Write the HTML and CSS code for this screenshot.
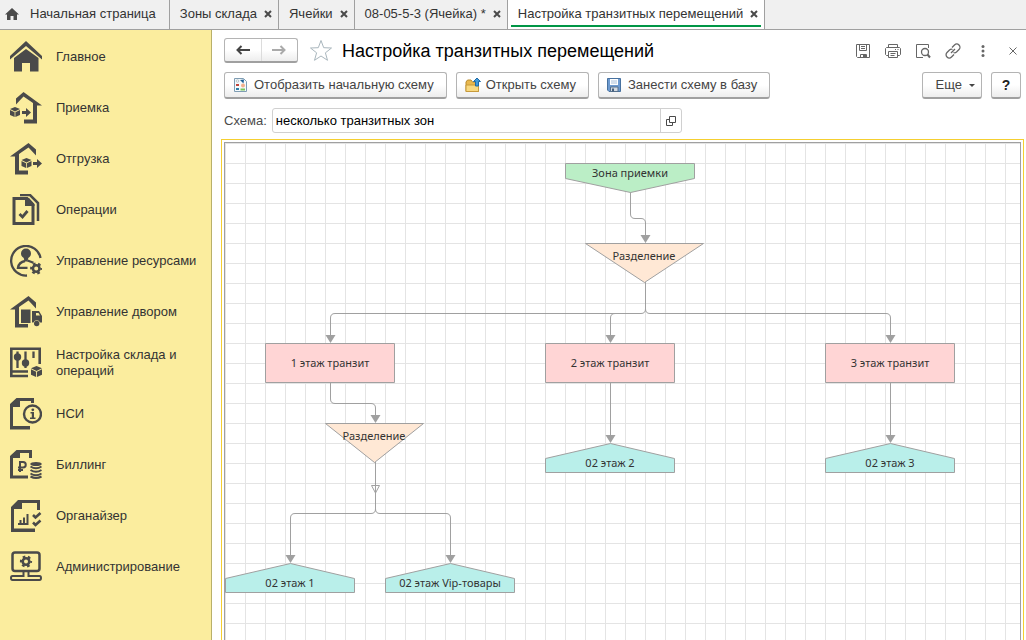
FILE: index.html
```html
<!DOCTYPE html>
<html lang="ru">
<head>
<meta charset="utf-8">
<title>Настройка транзитных перемещений</title>
<link rel="stylesheet" href="styles.css">
</head>
<body>
<svg class="defs" width="0" height="0" aria-hidden="true">
  <defs>
    <g id="cube">
      <path d="M5 0 10 2 5 4.500 0 2Z"/>
      <path d="M0 3 4.600 5.200V10L0 8Z"/>
      <path d="M10 3 5.400 5.200V10L10 8Z"/>
    </g>
    <path id="arrow" d="M0 3H4V0L9 4.500 4 9V6H0Z"/>
    <g id="gear">
      <circle r="3.300" fill="none" stroke="currentColor" stroke-width="2.600"/>
      <circle r="5" fill="none" stroke="currentColor" stroke-width="2.200" stroke-dasharray="2.600 2.636" stroke-dashoffset="1.300"/>
    </g>
    <path id="tip" d="M-5-8H5L0 0Z"/>
  </defs>
</svg>

<header class="tabs">
  <a class="tab tab-home" href="#">
    <svg width="14" height="12" viewBox="0 0 14 12"><path d="M7 0 14 6.500H12V12H8.500V8H5.500V12H2V6.500H0Z"/></svg>
    Начальная страница
  </a>
  <div class="tab"><a href="#">Зоны склада</a><button class="tab-close" aria-label="Закрыть"><svg width="8" height="8" viewBox="0 0 8 8"><path d="M1 1 7 7M7 1 1 7"/></svg></button></div>
  <div class="tab"><a href="#">Ячейки</a><button class="tab-close" aria-label="Закрыть"><svg width="8" height="8" viewBox="0 0 8 8"><path d="M1 1 7 7M7 1 1 7"/></svg></button></div>
  <div class="tab"><a href="#">08-05-5-3 (Ячейка) *</a><button class="tab-close" aria-label="Закрыть"><svg width="8" height="8" viewBox="0 0 8 8"><path d="M1 1 7 7M7 1 1 7"/></svg></button></div>
  <div class="tab tab-active"><a href="#">Настройка транзитных перемещений</a><button class="tab-close" aria-label="Закрыть"><svg width="8" height="8" viewBox="0 0 8 8"><path d="M1 1 7 7M7 1 1 7"/></svg></button></div>
</header>

<div class="workspace">
  <nav class="sections">
    <a class="section" href="#">
      <svg viewBox="0 0 32 32"><path d="M0 15 16 0 32 15V18.500L16 5 0 18.500Z"/><path d="M4 17 16 8 28.500 17V30.500H20V22H12V30.500H4Z"/></svg>
      <span>Главное</span>
    </a>
    <a class="section" href="#">
      <svg viewBox="0 0 32 32"><path d="M6 6.500 13.500 0 32 13.500H27V31.500H14V27.500H23V11L13.500 4.500 6 12.500Z"/><use href="#cube" y="15"/><use href="#arrow" x="12" y="16"/></svg>
      <span>Приемка</span>
    </a>
    <a class="section" href="#">
      <svg viewBox="0 0 32 32"><path d="M26 6.500 18.500 0 0 13.500H5V31.500H18V27.500H9V11L18.500 4.500 26 12.500Z"/><use href="#cube" x="11.500" y="15"/><use href="#arrow" x="23" y="16"/></svg>
      <span>Отгрузка</span>
    </a>
    <a class="section" href="#">
      <svg viewBox="0 0 32 32"><path class="line" d="M4 4.500H17L23 11V29.500H4Z" stroke-width="3"/><path d="M15 4H19L24.500 10V12H15Z"/><path class="line" d="M10 1H20L28 9V27" stroke-width="2.500"/><path class="line" d="M9.500 20 12.500 23 17.500 17" stroke-width="2.800"/></svg>
      <span>Операции</span>
    </a>
    <a class="section" href="#">
      <svg viewBox="0 0 32 32"><path class="line" d="M30.500 13A14.800 14.800 0 1 0 17 30.500" stroke-width="2.300"/><circle cx="16" cy="8.500" r="5"/><path d="M13.500 12H18.500L17.500 16.500H14.500Z"/><path class="line" d="M15 16Q9 17 8 22.800H17.500M17.500 15.500 23.500 17.800" stroke-width="2.300"/><use href="#gear" x="26.200" y="23.500"/></svg>
      <span>Управление ресурсами</span>
    </a>
    <a class="section" href="#">
      <svg viewBox="0 0 32 32"><path d="M26 6.500 18.500 0 0 13.500H5V31.500H18V28H9V11L18.500 4.500 26 12.500Z"/><path d="M11 13.500H20.500V27H11ZM22 15H29L32 20V26.500H30A3.500 3.500 0 0 0 23.500 26.500H22Z"/><circle cx="26.700" cy="27.500" r="2.700"/><path class="paper" d="M26 17H28.500L30 19.500H26Z"/></svg>
      <span>Управление двором</span>
    </a>
    <a class="section" href="#">
      <svg viewBox="0 0 32 32"><path class="line" d="M18 29H1.300V1.800H29.700V17M1 24.500H18" stroke-width="2.600"/><path class="line" d="M7.500 4.500V21M15.500 4.500V21M23.500 4.500V11" stroke-width="2.300"/><circle cx="7.500" cy="10" r="3.700"/><circle cx="15.500" cy="16" r="3.700"/><use href="#cube" transform="translate(21 19) scale(1.100)"/></svg>
      <span>Настройка склада и операций</span>
    </a>
    <a class="section" href="#">
      <svg viewBox="0 0 32 32"><path d="M0 6 6.500 0H24V5H21V3H10V9H3V28H20V31.500H0Z"/><circle class="line" cx="22.500" cy="16" r="8.500" stroke-width="2.400"/><path d="M20.500 14H24V19.500H25.500V21H20V19.500H21.800V15.500H20.500Z"/><circle cx="22.800" cy="11.800" r="1.400"/></svg>
      <span>НСИ</span>
    </a>
    <a class="section" href="#">
      <svg viewBox="0 0 32 32"><path d="M0 7 6.500 1H22V9H19V4H10V9H3V26.500H18V29.500H0Z"/><path class="line" d="M10 23V13H13A2.500 2.500 0 0 1 13 18.500H8M8 21H13" stroke-width="2"/><ellipse cx="26" cy="15" rx="5.800" ry="2"/><path class="line" d="M20.500 17.500Q26 21 31.500 17.500M20.500 21Q26 24.500 31.500 21M20.500 24.500Q26 28 31.500 24.500M20.500 27.500Q26 30.500 31.500 27.500" stroke-width="2"/></svg>
      <span>Биллинг</span>
    </a>
    <a class="section" href="#">
      <svg viewBox="0 0 32 32"><path d="M1 7 8 0H30V10H27V3H12V9H4V28.500H25V32H1Z"/><path class="line" d="M8 24H18.500M10.500 24V20M14 24V17.500M17.500 24V14" stroke-width="2"/><path class="line" d="M23 15 25.500 17.500 30.500 13M23 22.500 25.500 25 30.500 20.500" stroke-width="2.600"/></svg>
      <span>Органайзер</span>
    </a>
    <a class="section" href="#">
      <svg viewBox="0 0 32 32"><rect class="line" x="2.500" y="1.500" width="27" height="18.500" rx="2.500" stroke-width="2.500"/><path class="line" d="M13.500 20V25H2.500Q1 25 1 27T2.500 29H29.500Q31 29 31 27T29.500 25H18.500V20" stroke-width="2"/><use href="#gear" x="16" y="10.500"/></svg>
      <span>Администрирование</span>
    </a>
  </nav>

  <main class="form">
    <div class="form-head">
      <div class="history">
        <button aria-label="Назад"><svg width="14" height="10" viewBox="0 0 14 10"><path class="line" d="M14 5H2M5.500 1 1.500 5 5.500 9" stroke-width="2"/></svg></button>
        <button class="muted" aria-label="Вперед"><svg width="14" height="10" viewBox="0 0 14 10"><path class="line" d="M0 5H12M8.500 1 12.500 5 8.500 9" stroke-width="2"/></svg></button>
      </div>
      <button class="star" aria-label="Избранное"><svg width="24" height="23" viewBox="0 0 24 23"><path d="M12 1.500 14.700 8.700 22.500 9 16.400 13.800 18.500 21.300 12 17 5.500 21.300 7.600 13.800 1.500 9 9.300 8.700Z"/></svg></button>
      <h1>Настройка транзитных перемещений</h1>
      <div class="tools">
        <button aria-label="Сохранить"><svg viewBox="0 0 16 16"><path class="line" d="M1.500 1.500H14.500V14.500H2.500L1.500 13.500ZM4.500 1.500V7.500H11.500V1.500M6 3.500H10M6 5.500H10M5.500 14.500V11.500H11.500V14.500"/><path d="M8 12H11V14H8Z"/></svg></button>
        <button aria-label="Печать"><svg viewBox="0 0 16 16"><path class="line" d="M3.500 4.500V1.500H12.500V4.500M3.500 12.500H1.500L.5 11.500V5.500L1.500 4.500H14.500L15.500 5.500V11.500L14.500 12.500H12.500M3.500 8.500H12.500V14.500H3.500ZM5.500 10.500H10.500M5.500 12.500H9.500M10 6.500H11M12.500 6.500H13.500"/></svg></button>
        <button aria-label="Просмотр"><svg viewBox="0 0 16 16"><path class="line" d="M13.500 5V1.500H1.500V14.500H8"/><circle class="line" cx="10" cy="9" r="3.500" stroke-width="1.300"/><path class="line" d="M12.500 11.500 15 14.500" stroke-width="2"/></svg></button>
        <button aria-label="Ссылка"><svg viewBox="0 0 16 16"><path class="line" d="M7 4.500 9.500 2A3 3 0 0 1 14 6.500L11.500 9Q10 10.300 8.500 9.500M9 11.500 6.500 14A3 3 0 0 1 2 9.500L4.500 7Q6 5.700 7.500 6.500M6 10 10 6" stroke-width="1.300"/></svg></button>
        <button aria-label="Меню"><svg viewBox="0 0 16 16"><circle cx="8" cy="3.500" r="1.500"/><circle cx="8" cy="8" r="1.500"/><circle cx="8" cy="12.500" r="1.500"/></svg></button>
        <button aria-label="Закрыть форму"><svg viewBox="0 0 16 16"><path class="line" d="M4.500 4.500 11.500 11.500M11.500 4.500 4.500 11.500"/></svg></button>
      </div>
    </div>

    <div class="commands">
      <button class="btn">
        <svg width="16" height="16" viewBox="0 0 16 16"><path d="M1.500 1.500H10.500L13.500 4.500V14.500H1.500Z" fill="#f5fafc" stroke="#7f9db3"/><circle cx="4.500" cy="4" r="1.300" fill="none" stroke="#b8c4cc"/><path d="M3 7H6V9H3Z" fill="#c0453a"/><path d="M3 11H6V13H3Z" fill="#2f7fa8"/><path d="M7 3 11 2.500 10.500 6.500Z" fill="#1d6096"/><circle cx="10" cy="8.500" r="2" fill="#f3b08c"/><path d="M7.500 11.500H12V13.500H7.500Z" fill="#79c65a"/></svg>
        Отобразить начальную схему
      </button>
      <button class="btn">
        <svg width="16" height="16" viewBox="0 0 16 16"><path d="M1 5 2.500 3H6L7.500 5H13.500V14.500H1Z" fill="#e9b84e" stroke="#b98a2c"/><path d="M1 8H13.500V14.500H1Z" fill="#f9d97f" stroke="#c79a3b"/><path d="M12 1 15.500 4.500H13.500V9H10.500V4.500H8.500Z" fill="#3f9bdc" stroke="#1f6aa5"/></svg>
        Открыть схему
      </button>
      <button class="btn">
        <svg width="16" height="16" viewBox="0 0 16 16"><path d="M.5 1.500H13.500V14.500H2L.5 13Z" fill="#6d9ad0" stroke="#47719f"/><path d="M3 2H11V8H3Z" fill="#fff"/><path d="M4 4H10M4 6H10" stroke="#a8bfd8"/><path d="M3.500 10H11V14.500H3.500Z" fill="#d5dbe2" stroke="#56708c"/><path d="M5 11.500H7V14.500H5Z" fill="#47607c"/></svg>
        Занести схему в базу
      </button>
      <button class="btn btn-more">Еще<span class="caret"></span></button>
      <button class="btn btn-help">?</button>
    </div>

    <div class="field">
      <label for="scheme">Схема:</label>
      <div class="field-box">
        <input id="scheme" type="text" value="несколько транзитных зон">
        <button aria-label="Открыть"><svg width="10" height="10" viewBox="0 0 10 10"><path class="line" d="M3.500.5H9.500V6.500H3.500ZM3 3.500H.5V9.500H6.500V7"/></svg></button>
      </div>
    </div>

    <div class="scheme-frame">
      <div class="scheme">
        <svg class="diagram" role="img" aria-label="Схема транзитных перемещений">
          <g class="edges">
            <path d="M405.500 49V71Q405.500 75.500 410 75.500H416Q420.500 75.500 420.500 80V94"/>
            <path d="M420.500 139V166Q420.500 170.500 416 170.500H110Q105.500 170.500 105.500 175V194"/>
            <path d="M420.500 166Q420.500 170.500 425 170.500H661Q665.500 170.500 665.500 175V194"/>
            <path d="M390 170.500Q385.500 170.500 385.500 175V194"/>
            <path d="M105.500 239V256Q105.500 260.500 110 260.500H146Q150.500 260.500 150.500 265V274"/>
            <path d="M385.500 239V294M665.500 239V294"/>
            <path d="M150.500 319V366Q150.500 370.500 146 370.500H70Q65.500 370.500 65.500 375V414"/>
            <path d="M150.500 366Q150.500 370.500 155 370.500H221Q225.500 370.500 225.500 375V414"/>
            <path d="M146.500 342.500H154.500L150.500 350Z"/>
          </g>
          <g class="tips">
            <use href="#tip" x="420.500" y="100"/>
            <use href="#tip" x="105.500" y="200"/>
            <use href="#tip" x="385.500" y="200"/>
            <use href="#tip" x="665.500" y="200"/>
            <use href="#tip" x="150.500" y="280"/>
            <use href="#tip" x="385.500" y="300"/>
            <use href="#tip" x="665.500" y="300"/>
            <use href="#tip" x="65.500" y="420"/>
            <use href="#tip" x="225.500" y="420"/>
          </g>
          <g class="nodes">
            <path class="receive" d="M340.500 20.500H469.500V35.500L405.500 49.500 340.500 35.500Z"/>
            <path class="split" d="M360.500 100.500H478.500L419.500 139.500Z"/>
            <path class="transit" d="M40.500 200.500H169.500V239.500H40.500Z"/>
            <path class="transit" d="M320.500 200.500H449.500V239.500H320.500Z"/>
            <path class="transit" d="M600.500 200.500H729.500V239.500H600.500Z"/>
            <path class="split" d="M100.500 280.500H198.500L149.500 319.500Z"/>
            <path class="storage" d="M320.500 329.500V315.500L385.500 300.500 449.500 315.500V329.500Z"/>
            <path class="storage" d="M600.500 329.500V315.500L665.500 300.500 729.500 315.500V329.500Z"/>
            <path class="storage" d="M.5 449.500V435.500L65.500 420.500 129.500 435.500V449.500Z"/>
            <path class="storage" d="M160.500 449.500V435.500L225.500 420.500 289.500 435.500V449.500Z"/>
          </g>
          <g class="captions">
            <text x="405" y="34">Зона приемки</text>
            <text x="419" y="117">Разделение</text>
            <text x="105" y="224">1 этаж транзит</text>
            <text x="385" y="224">2 этаж транзит</text>
            <text x="665" y="224">3 этаж транзит</text>
            <text x="149" y="297">Разделение</text>
            <text x="385" y="324">02 этаж 2</text>
            <text x="665" y="324">02 этаж 3</text>
            <text x="65" y="444">02 этаж 1</text>
            <text x="225" y="444">02 этаж Vip-товары</text>
          </g>
        </svg>
      </div>
    </div>
  </main>
</div>
</body>
</html>
```
FILE: styles.css
```css
* { box-sizing: border-box; }

body {
  margin: 0;
  height: 100vh;
  display: flex;
  flex-direction: column;
  overflow: hidden;
  background: #fff;
  color: #333;
  font: 13px/16px "Liberation Sans", Arial, sans-serif;
}

a { color: inherit; text-decoration: none; }
button { font: inherit; color: inherit; border: 0; padding: 0; background: none; }
svg { display: block; flex: none; fill: currentColor; }
.defs { position: absolute; }
.line { fill: none; stroke: currentColor; }

/* Window tabs */
.tabs {
  display: flex;
  flex: none;
  height: 30px;
  background: #f0f0f0;
  border-bottom: 1px solid #a0a0a0;
}
.tab {
  display: flex;
  align-items: center;
  gap: 7px;
  padding: 0 6px 2px 10px;
  border-right: 1px solid #a0a0a0;
  white-space: nowrap;
}
.tab-home { gap: 11px; padding-left: 5px; padding-right: 13px; }
.tab-home svg { color: #4a4a4a; }
.tab-active {
  background: linear-gradient(#009646, #009646) center 25px / calc(100% - 6px) 2px no-repeat #fff;
}
.tab-close svg { stroke: #4a4a4a; stroke-width: 2; }

.workspace { display: flex; flex: 1; min-height: 0; }

/* Section panel */
.sections {
  flex: none;
  width: 212px;
  padding-top: 1px;
  background: #fbed9e;
  border-right: 1px solid #b9b06a;
}
.section {
  display: flex;
  align-items: center;
  gap: 14px;
  height: 51px;
  padding: 0 14px 0 10px;
}
.section svg { width: 32px; height: 32px; color: #4a4a4a; }
.section .paper { fill: #fbed9e; }

/* Form */
.form {
  display: flex;
  flex-direction: column;
  flex: 1;
  min-width: 0;
  padding: 8px 2px 0 9px;
}
.form-head, .commands, .field {
  display: flex;
  align-items: center;
  padding: 0 3px;
}
.form-head { height: 25px; }
.history {
  display: flex;
  width: 74px;
  height: 25px;
  border: 1px solid #b4b4b4;
  border-bottom: 2px solid #a0a0a0;
  border-radius: 3px;
  background: linear-gradient(#fff 50%, #ededed);
}
.history button { flex: 1; display: grid; place-items: center; color: #444; }
.history .muted { color: #aaa; border-left: 1px solid #dcdcdc; }
.star { margin-left: 11px; }
.star svg { fill: none; stroke: #a9b6bd; }
h1 {
  margin: 0 0 0 9px;
  font-size: 18px;
  line-height: 24px;
  font-weight: 400;
  color: #000;
  white-space: nowrap;
}
.tools { display: flex; gap: 14px; margin-left: auto; color: #666; }
.tools svg { width: 16px; height: 16px; }

.commands { gap: 9px; margin-top: 9px; color: #444; }
.btn {
  display: flex;
  align-items: center;
  gap: 5px;
  height: 27px;
  padding: 0 12px 0 8px;
  border: 1px solid #b4b4b4;
  border-bottom: 2px solid #a0a0a0;
  border-radius: 3px;
  background: linear-gradient(#fff 50%, #ededed);
  white-space: nowrap;
}
.btn-more { margin-left: auto; gap: 7px; padding: 0 6px 0 13px; }
.caret { border: 3px solid transparent; border-top-color: #444; border-bottom: 0; }
.btn-help { width: 30px; padding: 0; justify-content: center; font-size: 14px; font-weight: 700; color: #222; }

.field { gap: 5px; margin-top: 9px; color: #4a4a4a; }
.field-box {
  display: flex;
  width: 410px;
  height: 25px;
  border: 1px solid #d0d0d0;
  border-radius: 3px;
}
.field-box input {
  flex: 1;
  min-width: 0;
  padding: 0 3px;
  border: 0;
  outline: 0;
  background: none;
  font: inherit;
  color: #000;
}
.field-box button { display: grid; place-items: center; width: 21px; border-left: 1px solid #d0d0d0; }

/* Diagram */
.scheme-frame {
  display: flex;
  flex: 1;
  min-height: 0;
  margin-top: 6px;
  padding: 2px 2px 0;
  border: 1px solid #f5cf30;
  border-bottom: 0;
}
.scheme {
  flex: 1;
  min-width: 0;
  border: 1px solid #a0a0a0;
  border-bottom: 0;
  background:
    linear-gradient(#e4e4e4 1px, transparent 1px) 0 0 / 20px 20px,
    linear-gradient(90deg, #e4e4e4 1px, transparent 1px) 0 0 / 20px 20px;
}
.diagram { width: 100%; height: 100%; }
.edges { fill: none; stroke: #a0a0a0; }
.tips { fill: #a0a0a0; }
.nodes { stroke: #a0a0a0; }
.receive { fill: #bbeec6; }
.split { fill: #ffe8d5; }
.transit { fill: #ffd5d5; }
.storage { fill: #b9efea; }
.captions { fill: #333; font: 11px "Noto Sans", sans-serif; text-anchor: middle; }
```
